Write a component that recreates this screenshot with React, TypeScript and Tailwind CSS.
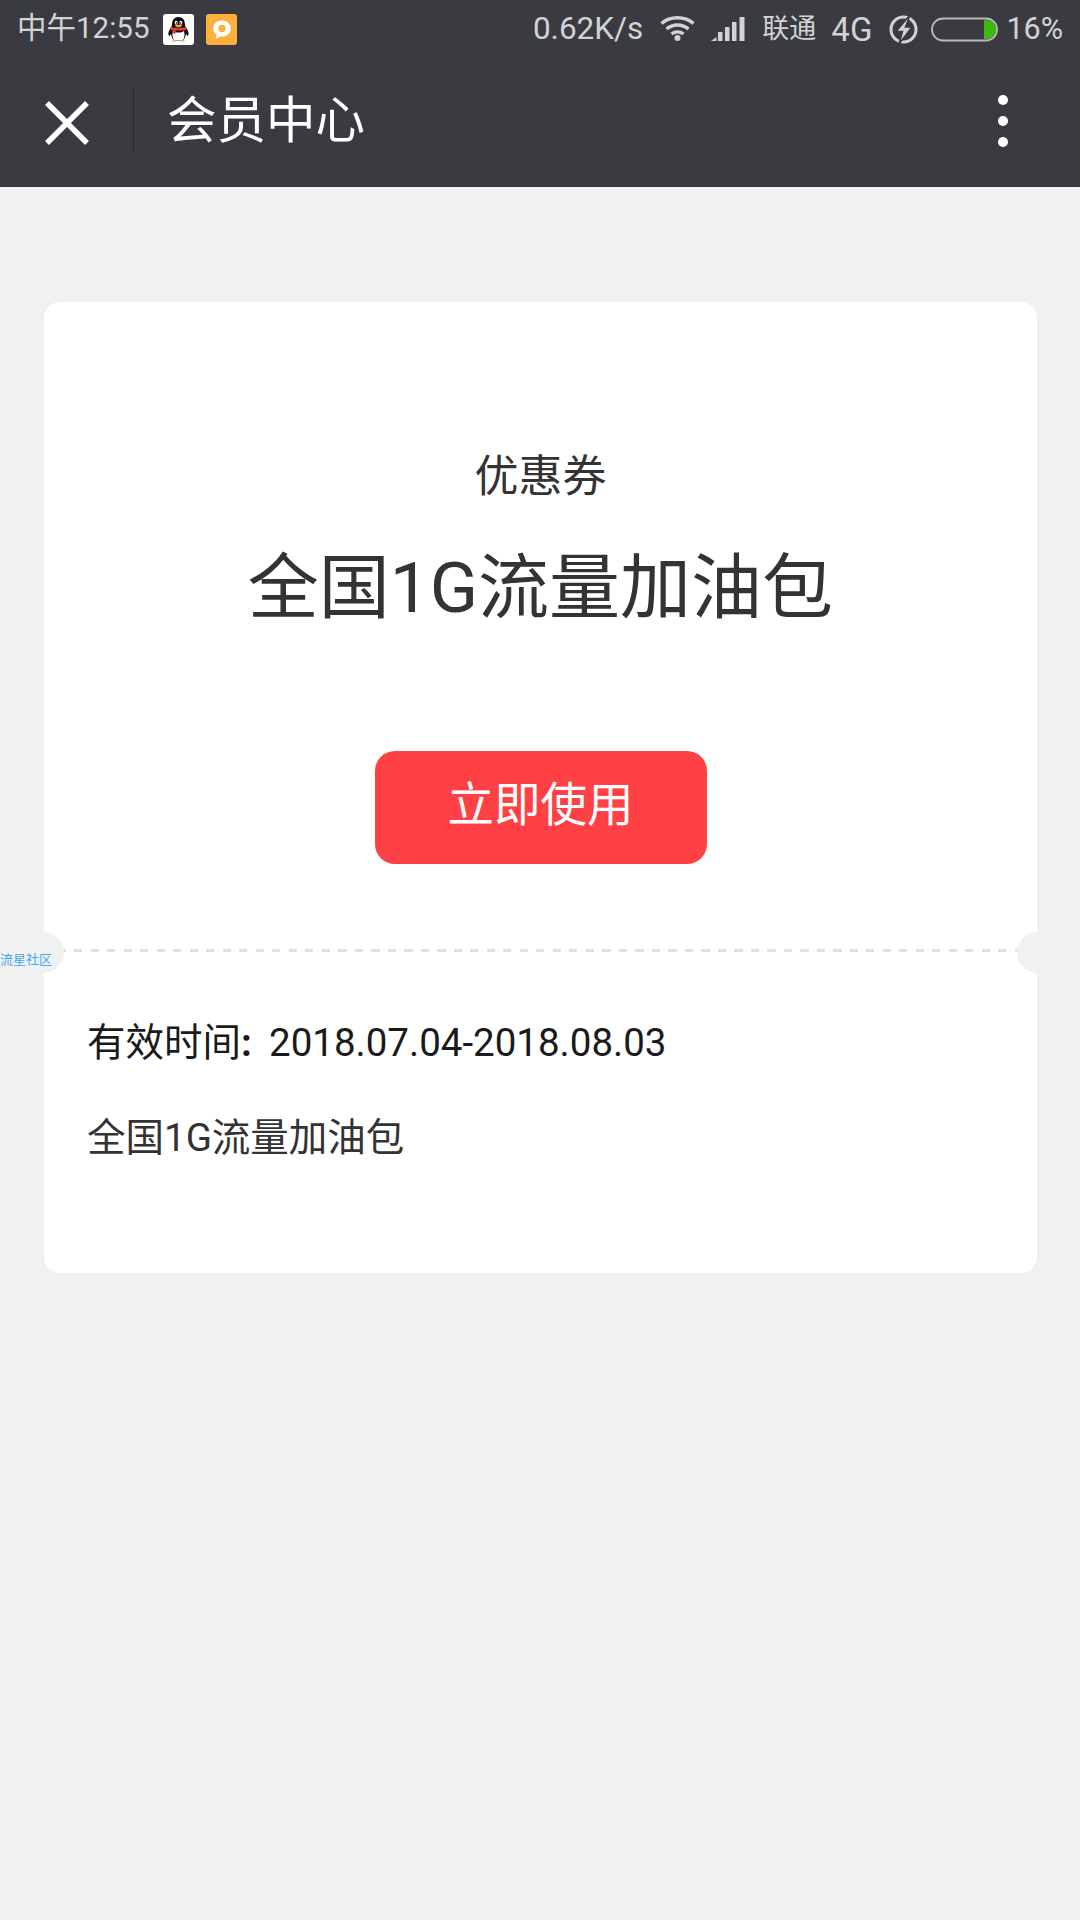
import React from "react";

const font = { fontFamily: '"Roboto","Noto Sans CJK SC",sans-serif' };

function QQ() {
  return (
    <svg width="31" height="31" viewBox="0 0 31 31" className="rounded-[3px] bg-white">
      <path d="M15.500 3c-4 0-6.400 3-6.400 6.800 0 1.500-.4 2.600-.9 3.500h14.600c-.5-.9-.9-2-.9-3.500C21.900 6 19.500 3 15.500 3z" fill="#0b0b0b" />
      <path d="M8.200 13.300c-1 1.600-2.600 3.800-2.800 6-.1 1.300.3 2.300 1 2.800l1.600-2c.6 3 1.600 5.200 2.700 6.400h9.600c1.100-1.200 2.100-3.400 2.700-6.400l1.600 2c.7-.5 1.100-1.500 1-2.800-.2-2.200-1.800-4.400-2.800-6z" fill="#0b0b0b" />
      <path d="M10 17c1.500 1 3.500 1.500 5.500 1.500S19.500 18 21 17c1 3.500.6 6.500-1 9.300h-9c-1.600-2.800-2-5.800-1-9.300z" fill="#fff" />
      <path d="M7.500 13.200c5 1.400 11 1.400 16 0l.2 2.200c-1.100.5-2.300.9-3.700 1.100l-.3 0H11.300c-1.500-.2-2.800-.6-3.900-1.100z" fill="#ee3a2f" />
      <path d="M9.600 15.500h3.200l-.3 4.300-2.700-.4z" fill="#ee3a2f" />
      <ellipse cx="13.200" cy="8.800" rx="1.500" ry="2" fill="#fff" />
      <ellipse cx="17.800" cy="8.800" rx="1.500" ry="2" fill="#fff" />
      <circle cx="13.500" cy="9" r=".8" fill="#000" />
      <circle cx="17.500" cy="9" r=".8" fill="#000" />
      <path d="M11.500 11.300c2.500-.8 5.500-.8 8 0-1 1.400-2.500 1.800-4 1.800s-3-.4-4-1.800z" fill="#f9b117" />
      <path d="M8 27.300c1-1 3-1.200 4.500-.5l-.3.800H8.500zM23 27.300c-1-1-3-1.200-4.500-.5l.3.800h3.700z" fill="#f9b117" />
    </svg>
  );
}

function Orange() {
  return (
    <svg width="31" height="31" viewBox="0 0 31 31" className="rounded-[3px] bg-[#ffb03c]">
      <path d="M16 6.500c-4.900 0-8.800 3.500-8.800 7.900 0 2.600 1.300 4.800 3.400 6.300l-.7 4.200 4.300-2.500c.6.100 1.200.2 1.800.2 4.900 0 8.800-3.700 8.800-8.200S20.900 6.500 16 6.500z" fill="#fff" />
      <circle cx="16" cy="14.500" r="3.700" fill="#ffb03c" />
    </svg>
  );
}

function Wifi() {
  return (
    <svg width="35" height="26" viewBox="0 0 35 26" fill="none" stroke="#d2d3d6" strokeWidth="3.500">
      <path d="M1.500 8.500C10 .8 25 .8 33.500 8.500" />
      <path d="M6.500 14c6.500-5.500 15.500-5.500 22 0" />
      <path d="M11.500 19c3.500-2.800 8.500-2.800 12 0" />
      <circle cx="17.500" cy="23" r="3" fill="#d2d3d6" stroke="none" />
    </svg>
  );
}

function Signal() {
  return (
    <svg width="34" height="24" viewBox="0 0 34 24" fill="#d2d3d6">
      <path d="M0 24l5.500-4v4z" />
      <rect x="7" y="15" width="4.500" height="9" />
      <rect x="14" y="10" width="4.500" height="14" />
      <rect x="21" y="5" width="4.500" height="19" />
      <rect x="28.500" y="0" width="5" height="24" />
    </svg>
  );
}

function Charge() {
  return (
    <svg width="29" height="29" viewBox="0 0 29 29" fill="none">
      <circle cx="14.500" cy="14.500" r="12.500" stroke="#d2d3d6" strokeWidth="3" />
      <path d="M21 0L7 16.500h6.500L10 29l13-17h-6.500z" fill="#d2d3d6" stroke="#3a3b41" strokeWidth="1.500" />
    </svg>
  );
}

function Battery() {
  return (
    <svg width="67" height="25" viewBox="0 0 67 25" fill="none">
      <rect x="1" y="1.500" width="65" height="22" rx="11" stroke="#b9babd" strokeWidth="1.800" />
      <path d="M53 3h3c5 0 9 4.300 9 9.500S61 22 56 22h-3z" fill="#3fb90f" />
    </svg>
  );
}

export default function App() {
  return (
    <div className="w-[1080px] h-[1920px] bg-[#f1f1f1] relative overflow-hidden" style={font}>
      <header className="h-[187px] bg-[#3a3b41] flex flex-col">
        <div className="h-[58px] flex items-center pl-[17px] pr-[17px] text-[#d2d3d6] leading-none">
          <span className="w-[146px] text-[29.500px] whitespace-nowrap">中午12:55</span>
          <span className="flex"><QQ /></span>
          <span className="flex ml-[12px]"><Orange /></span>
          <span className="ml-auto whitespace-nowrap text-[31.500px]">0.62K/s</span>
          <span className="flex ml-[17px] mt-[-3px]"><Wifi /></span>
          <span className="flex ml-[16px]"><Signal /></span>
          <span className="ml-[17px] whitespace-nowrap text-[27px]">联通</span>
          <span className="ml-[15px] whitespace-nowrap text-[33px]">4G</span>
          <span className="flex ml-[17px]"><Charge /></span>
          <span className="flex ml-[13px]"><Battery /></span>
          <span className="ml-[8px] whitespace-nowrap text-[30.500px]">16%</span>
        </div>
        <div className="flex-1 flex items-center">
          <div className="w-[133px] flex pl-[45px]">
            <svg width="44" height="44" viewBox="0 0 44 44" stroke="#fff" strokeWidth="5.500" fill="none">
              <path d="M2 2L42 42M42 2L2 42" />
            </svg>
          </div>
          <div className="w-[1px] h-[66px] bg-[#2c2d32] mt-[-6px]" />
          <div className="ml-[33px] text-[49.500px] text-white leading-none mt-[-2px]">会员中心</div>
          <div className="ml-auto mr-[72px] flex flex-col gap-[11px] mt-[-3px]">
            <div className="w-[10px] h-[10px] rounded-full bg-white" />
            <div className="w-[10px] h-[10px] rounded-full bg-white" />
            <div className="w-[10px] h-[10px] rounded-full bg-white" />
          </div>
        </div>
      </header>

      <main className="mt-[115px] mx-[44px] w-[993px] h-[971px] bg-white rounded-[16px] flex flex-col">
        <section className="h-[647px] flex flex-col items-center">
          <div className="mt-[149px] h-[52px] leading-[52px] text-[44px] text-[#333]">优惠券</div>
          <div className="mt-[43px] h-[84px] leading-[84px] text-[71px] text-[#333] whitespace-nowrap">全国1G流量加油包</div>
          <button className="mt-[121px] w-[332px] h-[113px] pb-[4px] rounded-[20px] bg-[#ff4045] text-white text-[46.500px] leading-none">立即使用</button>
        </section>
        <div className="h-[3px] ml-[14px] mr-[19px] bg-[repeating-linear-gradient(90deg,#e0e0e0_0,#e0e0e0_8px,transparent_8px,transparent_16.5px)]" />
        <section className="pl-[43px] pt-[67px]">
          <div className="h-[48px] leading-[48px] text-[38.500px] text-[#1a1a1a] whitespace-nowrap">有效时间<span className="font-bold inline-block w-[28px]">:</span>2018.07.04-2018.08.03</div>
          <div className="mt-[47px] h-[48px] leading-[48px] text-[38.500px] text-[#333] whitespace-nowrap">全国1G流量加油包</div>
        </section>
      </main>

      <div className="absolute left-[23px] top-[932px] w-[41px] h-[41px] rounded-full bg-[#f1f1f1]" />
      <div className="absolute left-[1017px] top-[932px] w-[41px] h-[41px] rounded-full bg-[#f1f1f1]" />
      <div className="absolute left-0 top-[952px] text-[13px] leading-[16px] text-[#48a6f2] whitespace-nowrap">流星社区</div>
    </div>
  );
}
